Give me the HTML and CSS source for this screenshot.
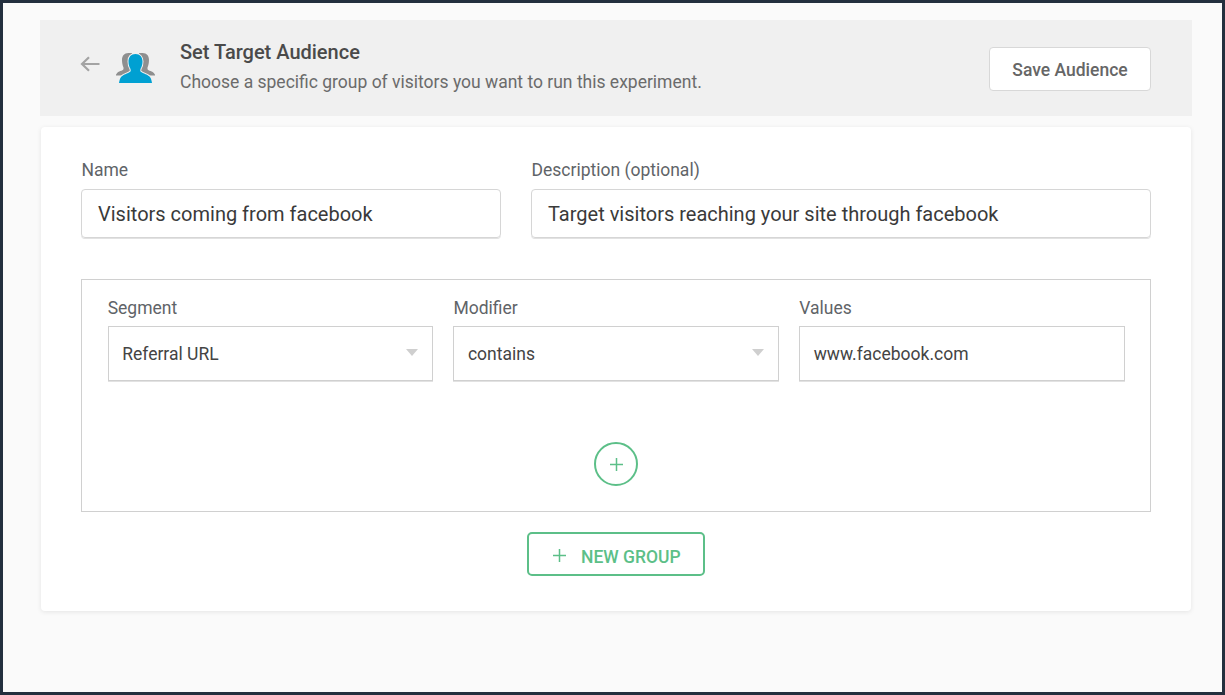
FILE: index.html
```html
<!DOCTYPE html>
<html lang="en">
<head>
<meta charset="utf-8">
<title>Set Target Audience</title>
<link rel="stylesheet" href="styles.css">
</head>
<body>
<div class="frame">
  <header class="head">
    <svg class="back" width="20" height="16" viewBox="0 0 20 16"><path d="M19.500 8H2M9 1.200 2 8l7 6.800" fill="none" stroke="#a3a3a3" stroke-width="2.200"/></svg>
    <svg class="people" width="39" height="30" viewBox="0 0 39 30">
      <path fill="#8f8f8f" d="M12.500 0C8 0 6 3 6 7c0 3 .7 6 1.500 7.500V16C7 18 2 18 .8 20.500.3 21 0 21.500 0 22.500h10l6-4V0zM26.500 0c4.500 0 6.500 3 6.500 7 0 3-.7 6-1.500 7.500V16c.5 2 5.500 2 6.700 4.500.5.500.8 1 .8 2H29l-6-4V0z"/>
      <path class="person-front" fill="#00a0d2" d="M19.500 1C15 1 12.500 4 12.500 8.500c0 3 .8 5.500 1.800 7 .4.800.4 1.500.4 2.500C14 20 8 21 5.500 23.500 4 25 3.500 27 3 30h33c-.5-3-1-5-2.500-6.500C31 21 25 20 24.300 18c0-1 0-1.700.4-2.500 1-1.500 1.800-4 1.800-7C26.500 4 24 1 19.500 1z"/>
    </svg>
    <div class="titles">
      <h1 class="title">Set Target Audience</h1>
      <p class="subtitle">Choose a specific group of visitors you want to run this experiment.</p>
    </div>
    <button class="save"><span class="save-text">Save Audience</span></button>
  </header>
  <main class="card">
    <div class="top-fields">
      <div class="field name-field">
        <label class="label">Name</label>
        <div class="input">Visitors coming from facebook</div>
      </div>
      <div class="field desc-field">
        <label class="label">Description (optional)</label>
        <div class="input">Target visitors reaching your site through facebook</div>
      </div>
    </div>
    <section class="group">
      <div class="rule">
        <div class="col">
          <label class="label">Segment</label>
          <div class="box">Referral URL<span class="caret"></span></div>
        </div>
        <div class="col">
          <label class="label">Modifier</label>
          <div class="box">contains<span class="caret"></span></div>
        </div>
        <div class="col">
          <label class="label">Values</label>
          <div class="box">www.facebook.com</div>
        </div>
      </div>
      <div class="add-wrap">
        <button class="add">
          <svg width="13" height="13" viewBox="0 0 13 13"><path d="M6.500 0v13M0 6.500h13" stroke="#5cbf88" stroke-width="1.500"/></svg>
        </button>
      </div>
    </section>
    <div class="new-wrap">
      <button class="new-group">
        <svg width="13" height="13" viewBox="0 0 13 13"><path d="M6.500 0v13M0 6.500h13" stroke="#5cbf88" stroke-width="1.500"/></svg>
        <span>NEW GROUP</span>
      </button>
    </div>
  </main>
</div>
</body>
</html>
```
FILE: styles.css
```css
* { box-sizing: border-box; }
html, body { margin: 0; height: 100%; }
body { font-family: Roboto, "Liberation Sans", sans-serif; color: #333; }
.frame {
  height: 695px;
  border: 3px solid #232f3e;
  background: #fafafa;
  padding: 17px 30px 0 37px;
}
.head {
  display: flex;
  align-items: center;
  height: 96px;
  background: #f0f0f0;
  padding: 0 41px 0 40px;
}
.back { flex: none; margin-right: 16px; margin-top: -8px; }
.people { flex: none; margin-right: 25px; }
.person-front { stroke: #f0f0f0; stroke-width: 2; paint-order: stroke; }
.titles { flex: 1; margin-top: -1px; }
.title { margin: -1px 0 8px; font-size: 20px; line-height: 22px; font-weight: 500; color: #4a4a4a; }
.subtitle { margin: 0; font-size: 17.500px; line-height: 22px; color: #6b6b6b; }
.save {
  width: 162px;
  height: 44px;
  margin-top: 1px;
  padding: 2px 0 0;
  background: #fff;
  border: 1px solid #d8d8d8;
  border-radius: 4px;
  font: 500 17.500px Roboto, sans-serif;
  color: #666;
}
.card {
  width: 1150px;
  height: 484px;
  margin: 11px 0 0 1px;
  background: #fff;
  border-radius: 4px;
  box-shadow: 0 1px 5px rgba(0,0,0,.09);
  padding: 30px 40px 0;
}
.top-fields { display: flex; gap: 30px; }
.top-fields .label { padding-left: .5px; }
.name-field { width: 420px; }
.desc-field { flex: 1; }
.label { display: block; font-size: 17.500px; line-height: 24px; padding-top: 1px; margin-bottom: -1px; color: #5f6468; }
.input {
  height: 49px;
  margin-top: 8px;
  margin-bottom: 1px;
  padding-left: 16px;
  border: 1px solid #d6d6d6;
  border-radius: 4px;
  box-shadow: 0 1px 0 #e2e2e2;
  font-size: 20px;
  line-height: 49px;
  color: #3a3a3a;
}
.group {
  height: 233px;
  margin-top: 40px;
  border: 1px solid #d0d0d0;
  padding: 15px 25px 0 25.700px;
}
.rule { display: flex; gap: 20px; }
.col { flex: 1; }
.box {
  position: relative;
  height: 55px;
  margin-top: 7px;
  margin-bottom: 1px;
  padding-left: 13.500px;
  border: 1px solid #d0d0d0;
  box-shadow: 0 1px 0 #e2e2e2;
  font-size: 17.500px;
  line-height: 54px;
  color: #444;
}
.caret {
  position: absolute;
  right: 14px;
  top: 22px;
  border: 6px solid transparent;
  border-top: 7px solid #cfcfcf;
  border-bottom: 0;
}
.add-wrap { display: flex; justify-content: center; margin-top: 60px; }
.add {
  display: flex;
  align-items: center;
  justify-content: center;
  width: 44px;
  height: 44px;
  padding: 0;
  background: #fff;
  border: 2px solid #5cbf88;
  border-radius: 50%;
}
.new-wrap { display: flex; justify-content: center; margin-top: 20px; }
.new-group {
  display: flex;
  align-items: center;
  gap: 15px;
  width: 178px;
  height: 44px;
  padding: 5px 0 0 24px;
  background: #fff;
  border: 2px solid #5cbf88;
  border-radius: 5px;
  font: 500 17.500px Roboto, sans-serif;
  color: #5cbf88;
}
.new-group svg { margin-top: -3px; }
```
